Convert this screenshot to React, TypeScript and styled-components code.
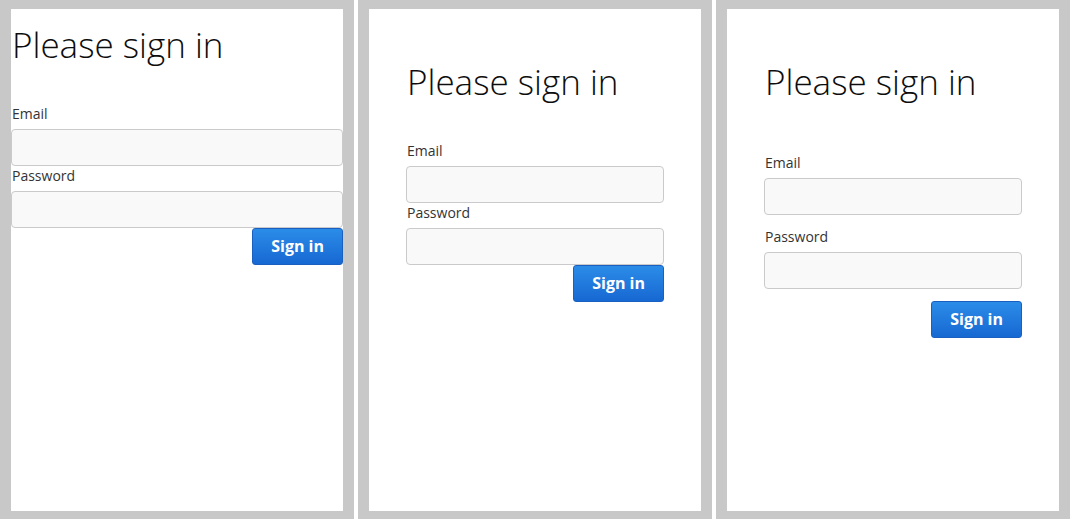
import React from "react";
import styled, { createGlobalStyle } from "styled-components";

const GlobalStyle = createGlobalStyle`
  html, body {
    margin: 0;
    padding: 0;
    background: #fff;
  }
  * {
    box-sizing: border-box;
  }
`;

const Strip = styled.div`
  display: flex;
  gap: 4px;
  width: 1070px;
  height: 519px;
  font-family: "Open Sans", "Liberation Sans", sans-serif;
`;

const Frame = styled.div`
  display: flex;
  width: 354px;
  height: 100%;
  padding: 9px 11px 8px;
  background: #c8c8c8;
`;

const Screen = styled.div`
  flex: 1;
  background: #fff;
`;

const SignInForm = styled.form<{ $inset: number; $gap: number }>`
  display: flex;
  flex-direction: column;
  gap: ${(p) => p.$gap}px;
  padding: ${(p) => p.$inset}px ${(p) => p.$inset}px 0;
`;

const Title = styled.h1`
  margin: 17px 0 39px 1px;
  font-size: 35px;
  font-weight: 300;
  line-height: 1.1;
  color: #0d0d0d;
`;

const Group = styled.div`
  display: flex;
  flex-direction: column;
`;

const Label = styled.label`
  margin: 0 0 5px 1px;
  font-size: 14px;
  line-height: 20px;
  color: #333;
`;

const Input = styled.input`
  height: 37px;
  width: 100%;
  padding: 6px 12px;
  border: 1px solid #cacaca;
  border-radius: 4px;
  background: #f9f9f9;
  font-family: inherit;
  font-size: 14px;
  outline: none;
`;

const Actions = styled.div`
  display: flex;
  justify-content: flex-end;
`;

const SubmitButton = styled.button`
  height: 37px;
  padding: 0 18px;
  border: 1px solid #1a60c0;
  border-radius: 3px;
  background: linear-gradient(#2b8ce8, #1768d2);
  color: #fff;
  font-family: inherit;
  font-size: 16px;
  font-weight: 700;
  cursor: pointer;
`;

const screens = [
  { inset: 0, gap: 0 },
  { inset: 37, gap: 0 },
  { inset: 37, gap: 12 },
];

const App: React.FC = () => {
  return (
    <>
      <GlobalStyle />
      <Strip>
        {screens.map((s, i) => (
          <Frame key={i}>
            <Screen>
              <SignInForm
                $inset={s.inset}
                $gap={s.gap}
                onSubmit={(e) => e.preventDefault()}
              >
                <Title>Please sign in</Title>
                <Group>
                  <Label htmlFor={`email-${i}`}>Email</Label>
                  <Input id={`email-${i}`} type="email" />
                </Group>
                <Group>
                  <Label htmlFor={`password-${i}`}>Password</Label>
                  <Input id={`password-${i}`} type="password" />
                </Group>
                <Actions>
                  <SubmitButton type="submit">Sign in</SubmitButton>
                </Actions>
              </SignInForm>
            </Screen>
          </Frame>
        ))}
      </Strip>
    </>
  );
};

export default App;
